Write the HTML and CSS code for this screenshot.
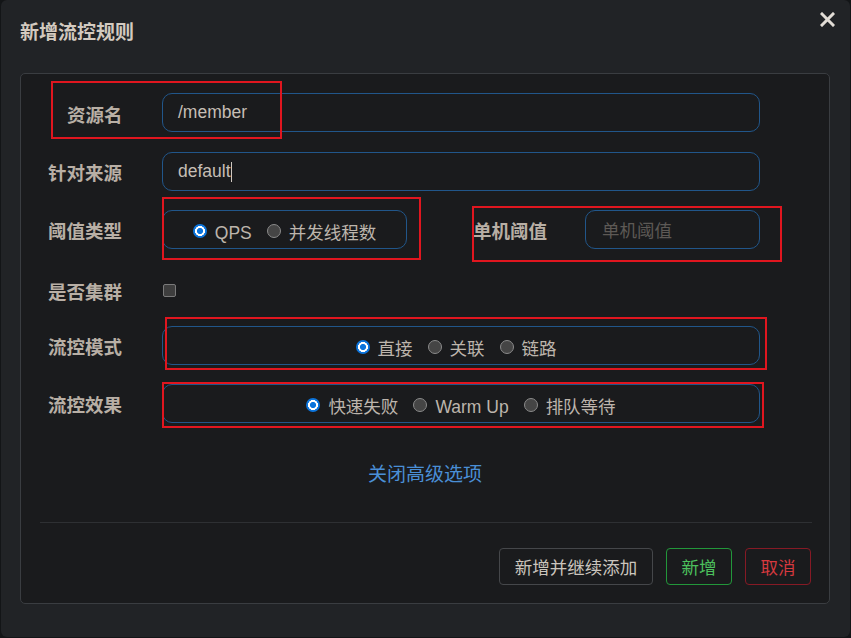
FILE: index.html
```html
<!DOCTYPE html>
<html lang="zh-CN">
<head>
<meta charset="utf-8">
<title>新增流控规则</title>
<link rel="stylesheet" href="styles.css">
</head>
<body>
<div class="modal">
  <div class="header">
    <h4 class="title">新增流控规则</h4>
    <span class="close" aria-label="关闭">
      <svg width="15" height="15" viewBox="0 0 15 15"><path d="M2 2 L13 13 M13 2 L2 13" stroke="#e2ddd6" stroke-width="3" stroke-linecap="square" fill="none"/></svg>
    </span>
  </div>
  <div class="panel">
    <div class="form">
      <div class="row r1">
        <span class="lbl lbl-indent">资源名</span>
        <div class="ctrl wide"><span class="val">/member</span></div>
      </div>
      <div class="row r2">
        <span class="lbl">针对来源</span>
        <div class="ctrl wide"><span class="val">default</span><span class="caret"></span></div>
      </div>
      <div class="row r3">
        <span class="lbl">阈值类型</span>
        <div class="ctrl radios qps">
          <span class="opt"><span class="dot on"></span>QPS</span>
          <span class="opt"><span class="dot off"></span>并发线程数</span>
        </div>
        <span class="lbl sub-lbl">单机阈值</span>
        <div class="ctrl small-in"><span class="ph">单机阈值</span></div>
      </div>
      <div class="row r4">
        <span class="lbl">是否集群</span>
        <span class="check"></span>
      </div>
      <div class="row r5">
        <span class="lbl">流控模式</span>
        <div class="ctrl radios full mode">
          <span class="opt"><span class="dot on"></span>直接</span>
          <span class="opt"><span class="dot off"></span>关联</span>
          <span class="opt"><span class="dot off"></span>链路</span>
        </div>
      </div>
      <div class="row r6">
        <span class="lbl">流控效果</span>
        <div class="ctrl radios full">
          <span class="opt"><span class="dot on"></span>快速失败</span>
          <span class="opt"><span class="dot off"></span>Warm Up</span>
          <span class="opt"><span class="dot off"></span>排队等待</span>
        </div>
      </div>
    </div>
    <div class="advanced"><a class="link">关闭高级选项</a></div>
    <div class="divider"></div>
    <div class="actions">
      <button class="btn btn-default">新增并继续添加</button>
      <button class="btn btn-ok">新增</button>
      <button class="btn btn-cancel">取消</button>
    </div>
  </div>
</div>
<div class="mark m1"></div>
<div class="mark m2"></div>
<div class="mark m3"></div>
<div class="mark m4"></div>
<div class="mark m5"></div>
</body>
</html>
```
FILE: styles.css
```css
html, body {
  margin: 0;
  padding: 0;
}
body {
  background: #131517;
  width: 851px;
  height: 638px;
  overflow: hidden;
  font-family: "Liberation Sans", "Noto Sans CJK SC", sans-serif;
}
.modal {
  margin-left: 1px;
  width: 849px;
  height: 637px;
  background: #212326;
  border-radius: 6px;
  box-sizing: border-box;
}
.header {
  display: flex;
  justify-content: space-between;
  align-items: flex-start;
  padding: 0 15px 0 19px;
  height: 73px;
}
.title {
  margin: 19px 0 0;
  font-family: "Noto Sans CJK SC", sans-serif;
  font-size: 19px;
  font-weight: 700;
  line-height: 24px;
  color: #d3cac0;
}
.close {
  margin-top: 12px;
  width: 15px;
  height: 15px;
  display: block;
}
.close svg { display: block; }
.panel {
  margin-left: 19px;
  width: 810px;
  box-sizing: border-box;
  border: 1px solid #3a3d41;
  border-radius: 5px;
  background: #1a1b1d;
}
.form {
  padding: 19px 0 0 27px;
}
.row {
  display: flex;
  align-items: center;
  height: 39px;
}
.r2 { margin-top: 20px; }
.r3 { margin-top: 19px; }
.r4 { margin-top: 22px; }
.r5 { margin-top: 16px; }
.r6 { margin-top: 19px; }
.lbl {
  flex: none;
  width: 114px;
  box-sizing: border-box;
  font-family: "Noto Sans CJK SC", sans-serif;
  font-size: 18.5px;
  font-weight: 700;
  color: #b8afa5;
  line-height: 24px;
  padding-top: 0;
}
.lbl-indent { padding-left: 19px; padding-top: 2px; }
.ctrl {
  flex: none;
  box-sizing: border-box;
  height: 39px;
  border: 1px solid #21568a;
  border-radius: 10px;
  display: flex;
  align-items: center;
}
.wide {
  width: 598px;
  padding-left: 15px;
}
.val {
  font-size: 17.5px;
  color: #c6beb5;
}
.caret {
  display: inline-block;
  width: 1px;
  height: 20px;
  background: #cfc8c0;
  margin-left: 0;
}
.radios {
  justify-content: center;
  gap: 15px;
  padding-top: 6px;
}
.mode { padding-right: 10px; }
.qps { width: 245px; }
.full { width: 598px; }
.sub-lbl {
  margin-left: 66px;
  width: 112px;
}
.small-in {
  width: 175px;
  padding-left: 16px;
}
.ph {
  font-family: "Noto Sans CJK SC", sans-serif;
  font-size: 17.5px;
  color: #5d5955;
}
.opt {
  display: flex;
  align-items: center;
  gap: 8px;
  font-size: 17.5px;
  color: #bdb5ac;
  line-height: 22px;
}
.dot {
  width: 14px;
  height: 14px;
  border-radius: 50%;
  box-sizing: border-box;
  flex: none;
  margin-top: -4px;
}
.dot.on {
  background: radial-gradient(circle at center, #0b74dc 0 2.8px, #ffffff 3.2px 4.8px, #0b74dc 5.2px);
}
.dot.off {
  background: #454545;
  border: 1px solid #8a8a8a;
}
.check {
  width: 13px;
  height: 13px;
  box-sizing: border-box;
  margin-left: 1px;
  margin-top: -1px;
  background: #3e3e3e;
  border: 1px solid #7a7a7a;
  border-radius: 2px;
}
.advanced {
  text-align: center;
  margin-top: 38px;
  line-height: 24px;
}
.link {
  font-family: "Noto Sans CJK SC", sans-serif;
  font-size: 19px;
  color: #4a8fd6;
  cursor: pointer;
}
.divider {
  margin: 34px 17px 0 19px;
  height: 1px;
  background: #2e3033;
}
.actions {
  display: flex;
  justify-content: flex-end;
  gap: 13px;
  margin: 25px 18px 0 0;
  padding-bottom: 18px;
}
.btn {
  height: 37px;
  padding: 0;
  border-radius: 4px;
  background: transparent;
  border: 1px solid;
  font-family: "Noto Sans CJK SC", sans-serif;
  font-size: 17.5px;
  line-height: 1;
  cursor: pointer;
}
.btn-default { width: 154px; border-color: #45474a; color: #cbc5bd; }
.btn-ok { width: 66px; border-color: #22973a; color: #4cc15d; }
.btn-cancel { width: 66px; border-color: #861a25; color: #d6393f; }
.mark {
  position: absolute;
  box-sizing: border-box;
  border: 2px solid #e0161f;
}
.m1 { left: 51px; top: 81px; width: 231px; height: 58px; }
.m2 { left: 162px; top: 197px; width: 259px; height: 63px; }
.m3 { left: 472px; top: 206px; width: 310px; height: 56px; }
.m4 { left: 165px; top: 317px; width: 602px; height: 53px; }
.m5 { left: 162px; top: 382px; width: 602px; height: 46px; }
```
